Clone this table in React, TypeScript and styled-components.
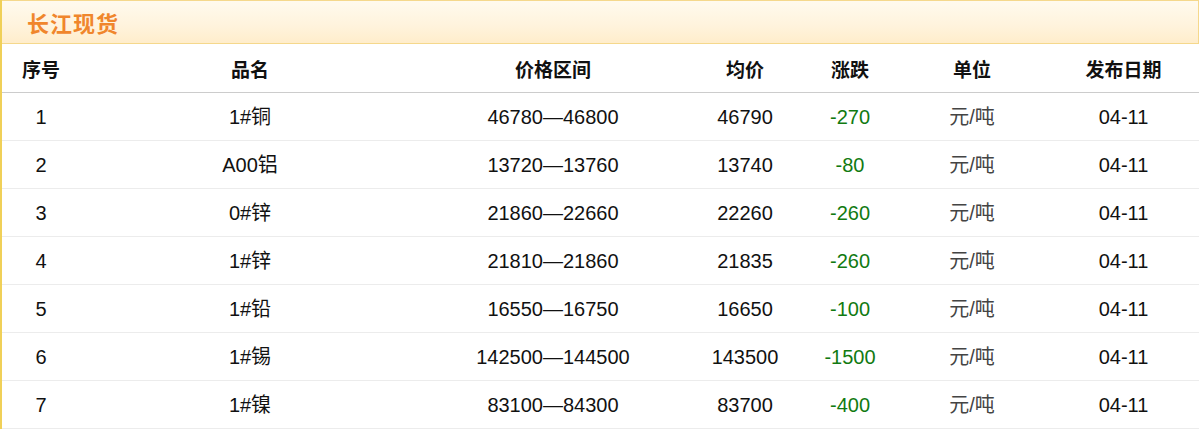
import styled, { createGlobalStyle } from "styled-components";

const GlobalStyle = createGlobalStyle`
    body {
        margin: 0;
        background: #ffffff;
        font-family: Arial, "Liberation Sans", "Noto Sans CJK SC", sans-serif;
    }
`;

const StyledPanel = styled.div`
    width: 1197px;
    border-left: 2px solid #f0d058;
    background: #ffffff;
`;

const StyledTitleBar = styled.div`
    height: 42px;
    display: flex;
    align-items: center;
    padding-left: 25px;
    border: 1px solid #f5d88c;
    border-left: none;
    background: linear-gradient(to bottom, #fffaee 0%, #fff3dc 60%, #ffedcb 100%);
`;

const StyledTitle = styled.h2`
    margin: 0;
    font-family: "Noto Sans CJK SC", sans-serif;
    font-size: 22px;
    font-weight: bold;
    color: #f0862c;
    letter-spacing: 1px;
`;

const columns = "78px 340px 266px 118px 92px 152px 1fr";

const StyledHeadRow = styled.div`
    display: grid;
    grid-template-columns: ${columns};
    height: 48px;
    align-items: center;
    border-bottom: 1px solid #cccccc;
`;

const StyledHeadCell = styled.div`
    text-align: center;
    font-family: "Noto Sans CJK SC", sans-serif;
    font-size: 19px;
    font-weight: bold;
    color: #111111;
`;

const StyledRow = styled.div`
    display: grid;
    grid-template-columns: ${columns};
    height: 47px;
    align-items: center;
    border-bottom: 1px solid #ececec;
`;

const StyledCell = styled.div<{ $tone?: "up" | "down" | "unit" }>`
    text-align: center;
    font-family: Arial, "Liberation Sans", "Noto Sans CJK SC", sans-serif;
    font-size: 20px;
    line-height: 24px;
    color: ${({ $tone }) =>
        $tone === "down" ? "#117a11" : $tone === "up" ? "#d40000" : $tone === "unit" ? "#444444" : "#111111"};
`;

const heads = ["序号", "品名", "价格区间", "均价", "涨跌", "单位", "发布日期"];

const rows = [
    { no: 1, name: "1#铜", low: 46780, high: 46800, avg: 46790, change: -270 },
    { no: 2, name: "A00铝", low: 13720, high: 13760, avg: 13740, change: -80 },
    { no: 3, name: "0#锌", low: 21860, high: 22660, avg: 22260, change: -260 },
    { no: 4, name: "1#锌", low: 21810, high: 21860, avg: 21835, change: -260 },
    { no: 5, name: "1#铅", low: 16550, high: 16750, avg: 16650, change: -100 },
    { no: 6, name: "1#锡", low: 142500, high: 144500, avg: 143500, change: -1500 },
    { no: 7, name: "1#镍", low: 83100, high: 84300, avg: 83700, change: -400 },
];

function App() {
    return (
        <>
            <GlobalStyle />
            <StyledPanel>
                <StyledTitleBar>
                    <StyledTitle>长江现货</StyledTitle>
                </StyledTitleBar>
                <StyledHeadRow>
                    {heads.map((h) => (
                        <StyledHeadCell key={h}>{h}</StyledHeadCell>
                    ))}
                </StyledHeadRow>
                {rows.map((r) => (
                    <StyledRow key={r.no}>
                        <StyledCell>{r.no}</StyledCell>
                        <StyledCell>{r.name}</StyledCell>
                        <StyledCell>
                            {r.low}—{r.high}
                        </StyledCell>
                        <StyledCell>{r.avg}</StyledCell>
                        <StyledCell $tone={r.change < 0 ? "down" : "up"}>{r.change}</StyledCell>
                        <StyledCell $tone="unit">元/吨</StyledCell>
                        <StyledCell>04-11</StyledCell>
                    </StyledRow>
                ))}
            </StyledPanel>
        </>
    );
}

export default App;
